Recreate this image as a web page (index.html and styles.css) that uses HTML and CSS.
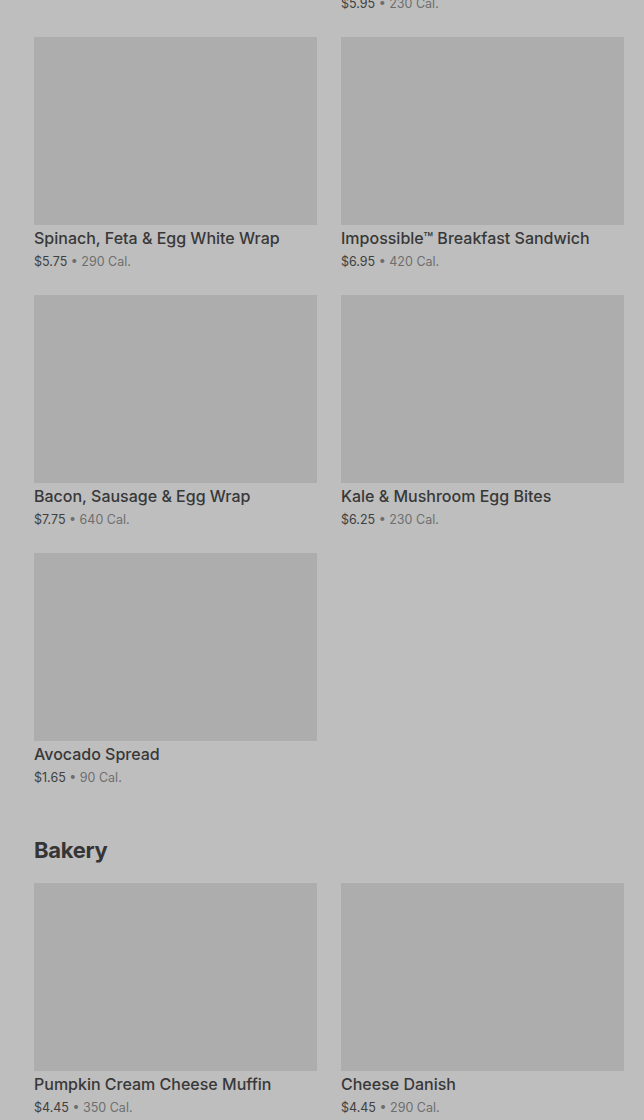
FILE: index.html
```html
<html>
  <head>
    <link rel="stylesheet" href="styles.css">
  </head>
  <body>
    <div class="page">
      <div class="grid first">
        <div class="card blank"></div>
        <div class="card">
          <div class="photo"></div>
          <div class="name">Egg &amp; Cheese Sandwich</div>
          <div class="meta"><span class="price">$5.95</span> • 230 Cal.</div>
        </div>
        <div class="card">
          <div class="photo"></div>
          <div class="name">Spinach, Feta &amp; Egg White Wrap</div>
          <div class="meta"><span class="price">$5.75</span> • 290 Cal.</div>
        </div>
        <div class="card">
          <div class="photo"></div>
          <div class="name">Impossible™ Breakfast Sandwich</div>
          <div class="meta"><span class="price">$6.95</span> • 420 Cal.</div>
        </div>
        <div class="card">
          <div class="photo"></div>
          <div class="name">Bacon, Sausage &amp; Egg Wrap</div>
          <div class="meta"><span class="price">$7.75</span> • 640 Cal.</div>
        </div>
        <div class="card">
          <div class="photo"></div>
          <div class="name">Kale &amp; Mushroom Egg Bites</div>
          <div class="meta"><span class="price">$6.25</span> • 230 Cal.</div>
        </div>
        <div class="card">
          <div class="photo"></div>
          <div class="name">Avocado Spread</div>
          <div class="meta"><span class="price">$1.65</span> • 90 Cal.</div>
        </div>
      </div>

      <h2 class="section">Bakery</h2>
      <div class="grid">
        <div class="card">
          <div class="photo"></div>
          <div class="name">Pumpkin Cream Cheese Muffin</div>
          <div class="meta"><span class="price">$4.45</span> • 350 Cal.</div>
        </div>
        <div class="card">
          <div class="photo"></div>
          <div class="name">Cheese Danish</div>
          <div class="meta"><span class="price">$4.45</span> • 290 Cal.</div>
        </div>
      </div>
    </div>
  </body>
</html>
```

FILE: styles.css
```css
body {
    margin: 0;
    background: #bebebe;
    font-family: Inter, "Noto Sans", sans-serif;
    overflow: hidden;
}
.page {
    padding: 0 20px 0 34px;
}
.grid {
    display: grid;
    grid-template-columns: 283px 283px;
    column-gap: 24px;
    row-gap: 23px;
}
.first {
    margin-top: -221px;
}
.card {
    height: 235px;
}
.blank {
    visibility: hidden;
}
.photo {
    height: 188px;
    background: #adadad;
}
.name {
    margin-top: 2px;
    font-size: 16px;
    font-weight: 500;
    line-height: 22px;
    color: #383838;
    white-space: nowrap;
}
.meta {
    margin-top: 2px;
    font-size: 12.5px;
    line-height: 22px;
    color: #6e6e6e;
}
.price {
    color: #404040;
}
.section {
    margin: 46px 0 17px;
    font-size: 22px;
    font-weight: 700;
    line-height: 32px;
    letter-spacing: -0.3px;
    color: #353535;
}
```
